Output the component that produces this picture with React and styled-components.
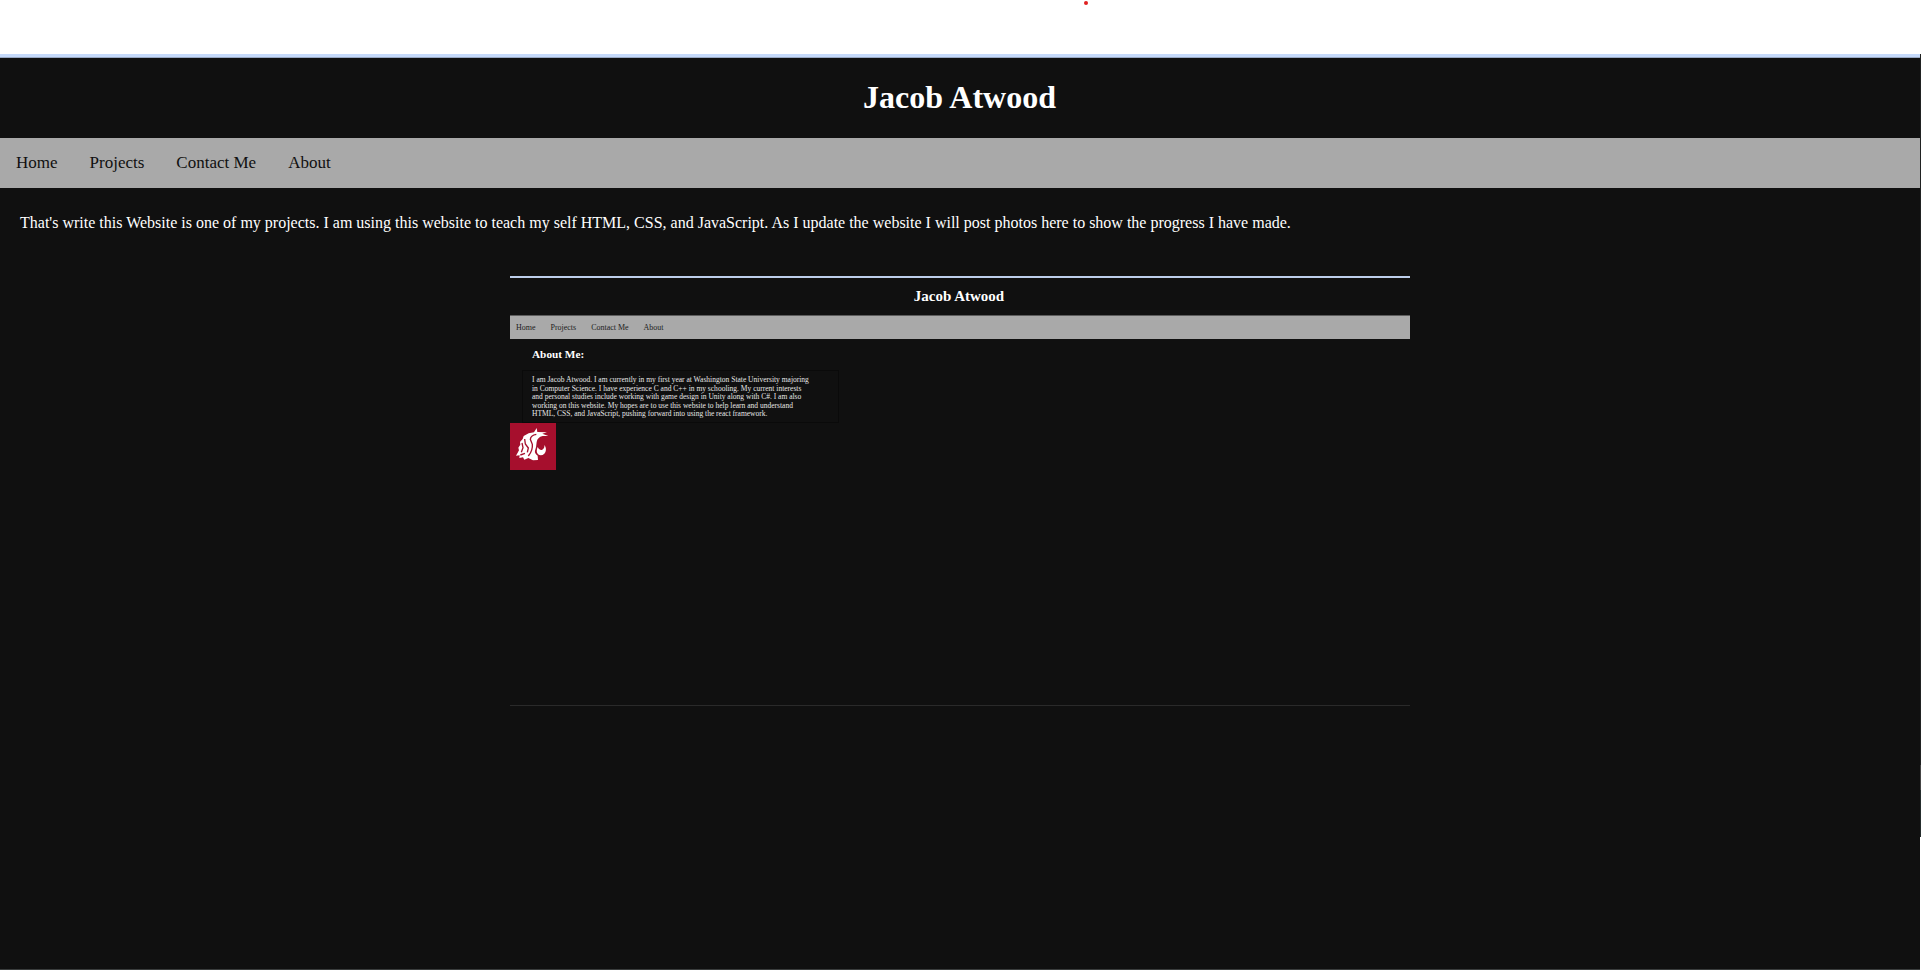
import React from "react";
import styled, { createGlobalStyle } from "styled-components";

const GlobalStyle = createGlobalStyle`
  * { box-sizing: border-box; }
  body {
    margin: 0;
    background: #101010;
    font-family: "Liberation Serif", "Times New Roman", serif;
    overflow: hidden;
  }
`;

const Page = styled.div`
  display: flex;
  height: 970px;
  width: 1921px;
  color: #fff;
`;

const Main = styled.main`
  flex: 1;
  display: flex;
  flex-direction: column;
  border-bottom: 1px solid #3a3d3d;
`;

const TopStrip = styled.div`
  height: 58px;
  background: #fff;
  border-bottom: 1px solid #9aa9c3;
  box-shadow: inset 0 -3px #c6dafb;
  display: flex;
  padding: 1px 0 0 1084px;
`;

const Dot = styled.span`
  width: 4px;
  height: 4px;
  border-radius: 50%;
  background: #e02020;
`;

const Header = styled.header`
  display: flex;
  align-items: center;
  justify-content: center;
  height: ${(p) => (p.$small ? "37px" : "80px")};
  padding: ${(p) => (p.$small ? "1px 2px 0 0" : "0 1px 1px 0")};
`;

const Title = styled.h1`
  margin: 0;
  font-size: ${(p) => (p.$small ? "15px" : "32px")};
  line-height: 1.15;
  font-weight: bold;
`;

const Nav = styled.nav`
  display: flex;
  align-items: center;
  height: ${(p) => (p.$small ? "24px" : "50px")};
  gap: ${(p) => (p.$small ? "15px" : "32px")};
  padding-left: ${(p) => (p.$small ? "6px" : "16px")};
  font-size: ${(p) => (p.$small ? "7.97px" : "17px")};
  background: #a9a9a9;
  color: ${(p) => (p.$small ? "#1c1c1c" : "#101010")};
  border-top: ${(p) => (p.$small ? "1px solid #5d5d5d" : "none")};
`;

const Intro = styled.p`
  margin: 26px 20px 0;
  height: 62px;
  font-size: 16px;
  line-height: 18px;
  white-space: nowrap;
`;

const Shot = styled.section`
  width: 900px;
  height: 430px;
  margin: 0 auto;
  border-top: 2px solid #bccdea;
  border-bottom: 1px solid #2a2a2a;
`;

const AboutTitle = styled.h2`
  margin: 9px 0 0 22px;
  font-size: 11.25px;
  line-height: 13px;
`;

const AboutBox = styled.div`
  width: 317px;
  height: 53px;
  margin: 9px 0 0 12px;
  padding: 5px 0 0 9px;
  border: 1px solid #0a0a0a;
  font-size: 7.53px;
  line-height: 8.5px;
  white-space: nowrap;
  color: #e6e6e6;
`;

const Line = styled.div`
  height: 8.5px;
`;

const Logo = styled.svg`
  display: block;
  width: 46px;
  height: 47px;
`;

const Edge = styled.aside`
  width: 1px;
  display: flex;
  flex-direction: column;
`;

const EdgePart = styled.div`
  height: ${(p) => p.$h}px;
  background: ${(p) => p.$color};
`;

const links = ["Home", "Projects", "Contact Me", "About"];

const aboutLines = [
  "I am Jacob Atwood. I am currently in my first year at Washington State University majoring",
  "in Computer Science. I have experience C and C++ in my schooling. My current interests",
  "and personal studies include working with game design in Unity along with C#. I am also",
  "working on this website. My hopes are to use this website to help learn and understand",
  "HTML, CSS, and JavaScript, pushing forward into using the react framework.",
];

const edgeParts = [
  [54, "#fff"],
  [711, "#202222"],
  [25, "#454545"],
  [47, "#252d2d"],
  [133, "#fff"],
];

function Links() {
  return links.map((label) => <span key={label}>{label}</span>);
}

function CougarLogo() {
  return (
    <Logo viewBox="0 0 138 141">
      <rect width="138" height="141" fill="#a60f2d" />
      <path
        fill="#fff"
        d="M18 98 L27 82 L25 74 L31 65 L30 57 L38 48 L41 39 L56 31 L72 28 L80 15 L82 27 L111 28 L97 32 L115 39 L98 39 Q82 43 80 57 Q79 73 75 83 Q73 91 83 98 L84 111 L69 112 L55 105 L43 110 L39 103 L28 105 L29 97 Z"
      />
      <path
        fill="#fff"
        d="M104 66 Q112 82 103 92 Q94 100 84 94 Q77 86 83 72 Q88 84 97 80 Q104 76 104 66 Z"
      />
      <path
        fill="none"
        stroke="#a60f2d"
        strokeWidth="4"
        d="M36 60 L39 74 L34 88 M44 48 L46 63 L55 75 L52 88 M79 34 Q62 37 61 49 L67 64 Q69 82 55 99 M31 96 L45 91"
      />
    </Logo>
  );
}

export default function App() {
  return (
    <Page>
      <GlobalStyle />
      <Main>
        <TopStrip>
          <Dot />
        </TopStrip>
        <Header>
          <Title>Jacob Atwood</Title>
        </Header>
        <Nav>
          <Links />
        </Nav>
        <Intro>
          That's write this Website is one of my projects. I am using this website to teach my
          self HTML, CSS, and JavaScript. As I update the website I will post photos here to show
          the progress I have made.
        </Intro>
        <Shot>
          <Header $small>
            <Title $small as="h2">Jacob Atwood</Title>
          </Header>
          <Nav $small>
            <Links />
          </Nav>
          <AboutTitle>About Me:</AboutTitle>
          <AboutBox>
            {aboutLines.map((line) => (
              <Line key={line}>{line}</Line>
            ))}
          </AboutBox>
          <CougarLogo />
        </Shot>
      </Main>
      <Edge>
        {edgeParts.map(([h, color], i) => (
          <EdgePart key={i} $h={h} $color={color} />
        ))}
      </Edge>
    </Page>
  );
}
